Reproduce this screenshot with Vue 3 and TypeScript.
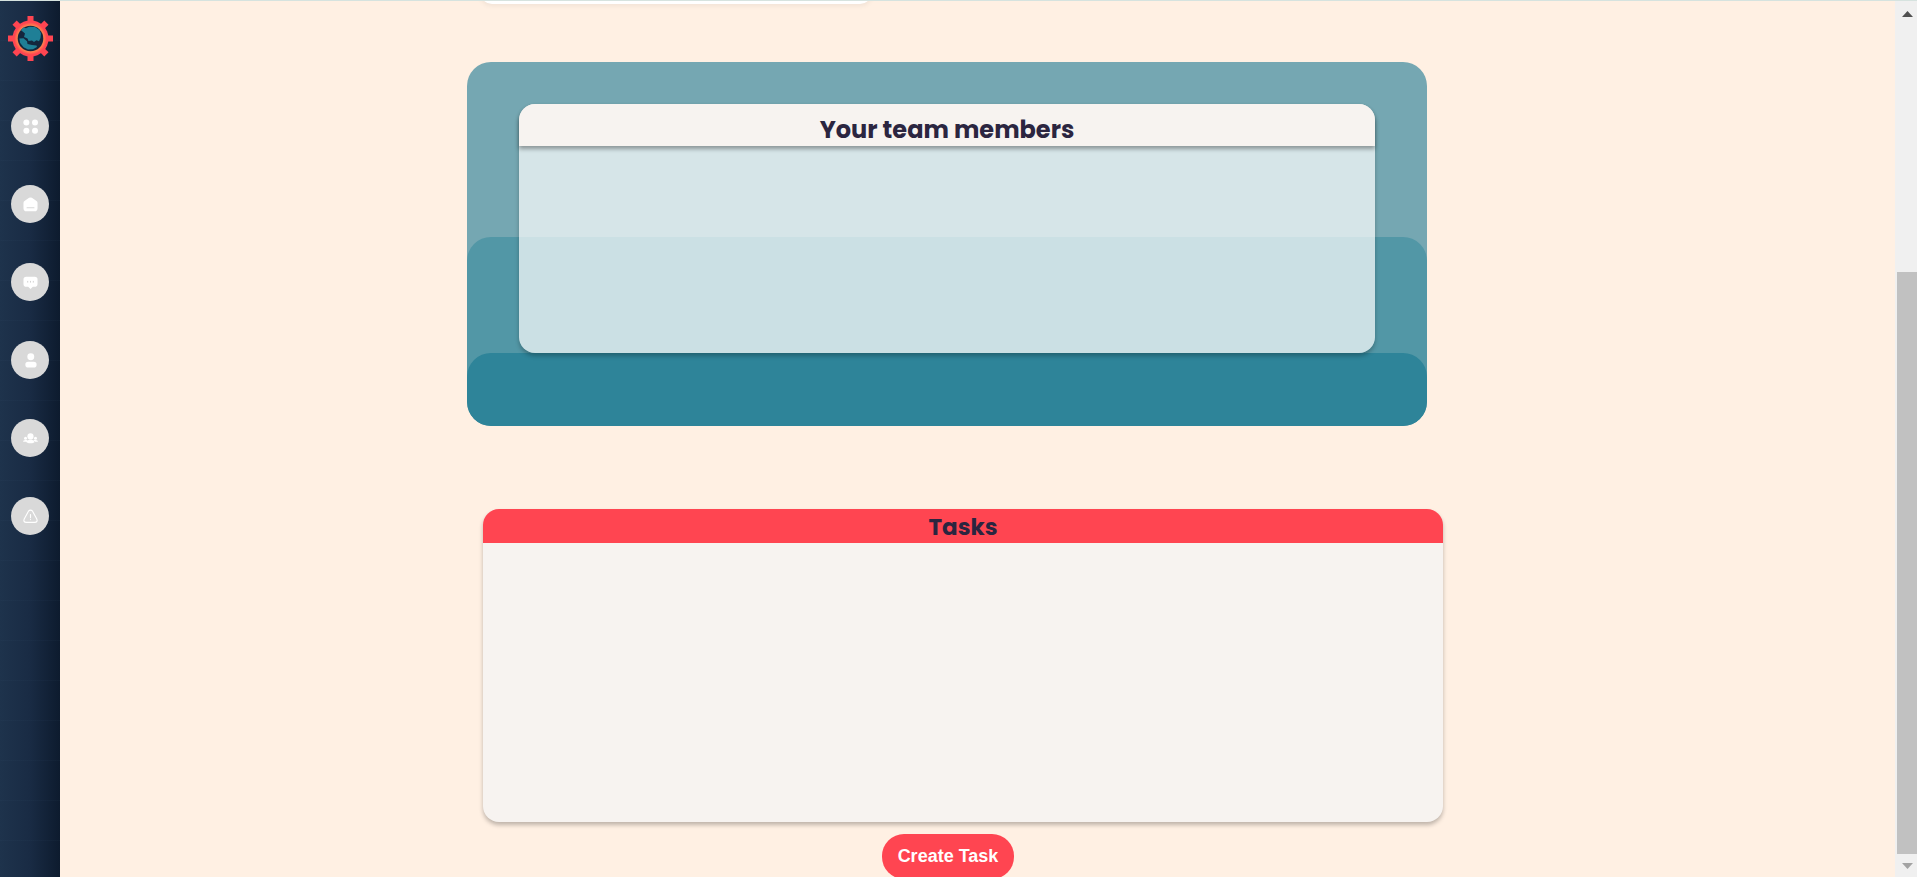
<script setup lang="ts">
interface NavItem {
  id: string
  label: string
}

const navItems: NavItem[] = [
  { id: 'dashboard', label: 'Dashboard' },
  { id: 'home', label: 'Home' },
  { id: 'messages', label: 'Messages' },
  { id: 'profile', label: 'Profile' },
  { id: 'team', label: 'Team' },
  { id: 'alerts', label: 'Alerts' },
]

const teethAngles: number[] = [0, 45, 90, 135, 180, 225, 270, 315]
</script>

<template>
  <div class="page">
    <nav class="sidebar" aria-label="Main">
      <a class="logo" href="#" aria-label="Start page">
        <svg viewBox="0 0 45 45" width="45" height="45" aria-hidden="true">
          <defs>
            <radialGradient id="ring">
              <stop offset="0.7" stop-color="#ff8a4c" />
              <stop offset="0.9" stop-color="#ff4551" />
            </radialGradient>
          </defs>
          <rect
            v-for="angle in teethAngles"
            :key="angle"
            x="19.5"
            y="0"
            width="6"
            height="8"
            fill="#ff4551"
            :transform="`rotate(${angle} 22.5 22.5)`"
          />
          <circle cx="22.5" cy="22.5" r="18" fill="url(#ring)" />
          <circle cx="22.5" cy="22.5" r="12.8" fill="#14263d" />
          <path fill="#1f7f96" d="M12.8 14 15.5 11.500 18 12.300 21 10.800 27 11 31.500 14 33 17.500 32.500 22 31 25.300 28.500 24.300 26 26 24 24.500 20.500 25 19.500 22.500 16 21 17 17.500Z" />
          <path fill="#1f7f96" d="M11.300 22.500 15.500 22.200 19 25.200 19.500 28 24 29 28.500 29.500 29 31 25 33.300 20 33.500 15.500 31.200 12.200 27Z" />
        </svg>
      </a>
      <ul class="nav-list">
        <li v-for="item in navItems" :key="item.id">
          <a class="nav-link" :href="`#${item.id}`" :aria-label="item.label">
            <svg viewBox="0 0 16 16" width="15" height="15" aria-hidden="true">
              <g v-if="item.id === 'dashboard'" fill="#fff">
                <circle cx="3.600" cy="3.600" r="3.200" />
                <circle cx="12.800" cy="3.600" r="3.200" />
                <circle cx="3.600" cy="12.600" r="3.200" />
                <circle cx="12.800" cy="12.600" r="3.200" />
              </g>
              <g v-else-if="item.id === 'home'">
                <path fill="#fff" d="M.5 6.4Q.5 5 1.6 4.3L6.5.9Q8 0 9.5.9l4.9 3.4q1.1.7 1.1 2.1V12q0 3.300-3.300 3.300H3.800Q.5 15.300.5 12Z" />
                <path stroke="#d9d9d9" stroke-width="1.200" stroke-linecap="round" d="M4.300 11.500h7.400" />
              </g>
              <g v-else-if="item.id === 'messages'">
                <path fill="#fff" d="M3.500 1.800h9q3 0 3 3v4.700q0 3-3 3h-2L8 15l-2.500-2.500h-2q-3 0-3-3V4.800q0-3 3-3Z" />
                <path stroke="#d0d0d0" stroke-width="1" d="M5 6.300v1.800M8 6.300v1.800M11 6.300v1.800" />
              </g>
              <g v-else-if="item.id === 'profile'" fill="#fff">
                <circle cx="8.300" cy="4" r="3.700" />
                <rect x="2.500" y="9.200" width="12" height="6.300" rx="3" />
              </g>
              <g v-else-if="item.id === 'team'" fill="#fff">
                <circle cx="8" cy="5.800" r="3.300" />
                <circle cx="2.700" cy="7.700" r="1.600" />
                <circle cx="13.300" cy="7.700" r="1.600" />
                <path d="M0 11.400q0-1.800 2.500-1.800h1.800v1.800ZM16 11.400q0-1.800-2.500-1.800h-1.800v1.800ZM3.300 11.200q1-1.900 4.700-1.900t4.700 1.900q-.5 1.900-4.700 1.900t-4.700-1.900Z" />
              </g>
              <g v-else fill="none" stroke="#fff" stroke-width="1.200" stroke-linecap="round" stroke-linejoin="round">
                <path d="M5.800 2.300Q8 0 10.200 2.300l4.500 8.300q1.300 3.400-2.200 3.700h-9Q0 14 1.300 10.600Z" />
                <path d="M8 5.800v3.400M8 11.200v.1" />
              </g>
            </svg>
          </a>
        </li>
      </ul>
    </nav>

    <main class="content">
      <div class="summary-row">
        <div class="summary-card"></div>
      </div>

      <section class="team" aria-labelledby="team-title">
        <div class="layer layer-middle"></div>
        <div class="layer layer-front"></div>
        <div class="team-card">
          <h2 id="team-title" class="team-title">Your team members</h2>
        </div>
      </section>

      <section class="tasks" aria-labelledby="tasks-title">
        <h2 id="tasks-title" class="tasks-title">Tasks</h2>
      </section>

      <button class="create" type="button">Create Task</button>
    </main>

    <div class="scrollbar" aria-hidden="true">
      <svg class="arrow" viewBox="0 0 11 6" width="11" height="6"><path fill="#505050" d="M5.500 0 11 6H0Z" /></svg>
      <div class="track"><div class="thumb"></div></div>
      <svg class="arrow" viewBox="0 0 11 6" width="11" height="6"><path fill="#a3a3a3" d="M0 0h11L5.500 6Z" /></svg>
    </div>
  </div>
</template>

<style>
body {
  margin: 0;
  background: #fff0e3;
}
</style>

<style scoped>
.page {
  display: flex;
  box-sizing: border-box;
  height: 100vh;
  overflow: hidden;
  border-top: 1px solid #d6e3df;
  background: #fff0e3;
  font-family: Poppins, Inter, "Liberation Sans", sans-serif;
}

.sidebar {
  flex: 0 0 60px;
  display: flex;
  flex-direction: column;
  align-items: center;
  box-sizing: border-box;
  padding-top: 15px;
  background:
    repeating-linear-gradient(to bottom, transparent 0 39px, rgba(70, 100, 130, 0.06) 39px 40px),
    linear-gradient(to right, #1e334c, #192b44 50%, #0d1b2e);
}

.logo {
  display: block;
  height: 45px;
}

.nav-list {
  display: flex;
  flex-direction: column;
  gap: 40px;
  margin: 46px 0 0;
  padding: 0;
  list-style: none;
}

.nav-link {
  display: flex;
  align-items: center;
  justify-content: center;
  width: 38px;
  height: 38px;
  border-radius: 50%;
  background: #d9d9d9;
}

.content {
  flex: 1;
  min-width: 0;
  display: flex;
  flex-direction: column;
  align-items: center;
  padding-right: 61px;
}

.summary-row {
  flex: none;
  width: 100%;
  max-width: 960px;
  margin-top: -97px;
}

.summary-card {
  width: 392px;
  height: 100px;
  margin-left: 13px;
  border-radius: 12px;
  background: #fff;
  box-shadow: 0 2px 5px rgba(0, 0, 0, 0.06);
}

.team {
  flex: none;
  display: grid;
  grid-template-rows: 364px;
  width: 100%;
  max-width: 960px;
  margin-top: 58px;
  border-radius: 24px;
  overflow: hidden;
  background: #75a7b2;
}

.layer,
.team-card {
  grid-area: 1 / 1;
}

.layer {
  align-self: end;
  border-radius: 24px;
}

.layer-middle {
  height: 52%;
  background: #5297a6;
}

.layer-front {
  height: 20%;
  background: #2e8499;
}

.team-card {
  margin: 42px 52px 73px;
  border-radius: 16px;
  background: rgba(255, 255, 255, 0.7);
  box-shadow: 0 3px 4px rgba(0, 0, 0, 0.25);
}

.team-title,
.tasks-title {
  margin: 0;
  color: #2b2540;
  font-weight: 700;
  text-align: center;
}

.team-title {
  padding-top: 10px;
  border-radius: 16px 16px 0 0;
  background: #f7f3f0;
  box-shadow: 0 3px 4px rgba(0, 0, 0, 0.35);
  font-size: 24px;
  line-height: 32px;
}

.tasks {
  flex: none;
  width: 100%;
  max-width: 960px;
  min-height: 313px;
  margin: 83px 0 0 32px;
  border-radius: 16px;
  overflow: hidden;
  background: #f7f3f0;
  box-shadow: 0 3px 4px rgba(0, 0, 0, 0.25);
}

.tasks-title {
  padding-top: 2px;
  background: #ff4551;
  font-size: 23px;
  line-height: 32px;
}

.create {
  flex: none;
  height: 45px;
  margin: 12px 0 0 2px;
  padding: 0 16px;
  border: 0;
  border-radius: 22px;
  background: #ff4551;
  color: #fff;
  font: 700 18px "Liberation Sans", Arial, sans-serif;
  cursor: pointer;
}

.scrollbar {
  flex: 0 0 22px;
  display: flex;
  flex-direction: column;
  align-items: center;
  box-sizing: border-box;
  padding: 10px 0 8px 2px;
  background: #f0f0f0;
}

.arrow {
  flex: none;
}

.track {
  flex: 1;
  display: flex;
  align-items: flex-end;
  width: 100%;
  margin: 6px 0 9px;
}

.thumb {
  width: 100%;
  height: 70%;
  background: #c1c1c1;
}
</style>
